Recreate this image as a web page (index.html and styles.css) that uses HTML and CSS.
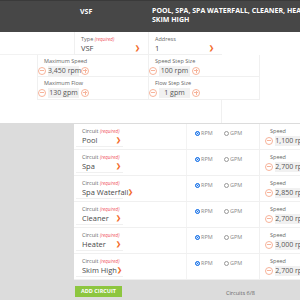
FILE: index.html
```html
<!DOCTYPE html>
<html lang="en">

<head>
    <meta charset="UTF-8">
    <meta name="viewport" content="width=device-width, initial-scale=1.0">
    <title>Pump VSF</title>
    <link rel="stylesheet" href="styles.css">
</head>

<body>
    <div id="pagina">
        <div id="cabecalho">
            <div class="cab-vazio"></div>
            <div class="cab-tipo">VSF</div>
            <div class="cab-circuitos">POOL, SPA, SPA WATERFALL, CLEANER, HEATER, SKIM HIGH</div>
        </div>

        <div id="config">
            <div class="linha linha-a">
                <div class="vazio-74"></div>
                <div class="campo-select">
                    <div class="rotulo">Type <span class="req">(required)</span></div>
                    <div class="valor">VSF <span class="seta">&#10095;</span></div>
                </div>
                <div class="campo-select">
                    <div class="rotulo">Address</div>
                    <div class="valor">1 <span class="seta">&#10095;</span></div>
                </div>
            </div>
            <div class="linha linha-b">
                <div class="vazio-37"></div>
                <div class="campo-passo esq">
                    <div class="rotulo">Maximum Speed</div>
                    <div class="passo">
                        <span class="btn-menos"></span>
                        <span class="caixa">3,450 rpm</span>
                        <span class="btn-mais"></span>
                    </div>
                </div>
                <div class="campo-passo dir">
                    <div class="rotulo">Speed Step Size</div>
                    <div class="passo">
                        <span class="btn-menos"></span>
                        <span class="caixa">100 rpm</span>
                        <span class="btn-mais"></span>
                    </div>
                </div>
            </div>
            <div class="linha linha-c">
                <div class="vazio-37"></div>
                <div class="campo-passo esq">
                    <div class="rotulo">Maximum Flow</div>
                    <div class="passo">
                        <span class="btn-menos"></span>
                        <span class="caixa">130 gpm</span>
                        <span class="btn-mais"></span>
                    </div>
                </div>
                <div class="campo-passo dir">
                    <div class="rotulo">Flow Step Size</div>
                    <div class="passo">
                        <span class="btn-menos"></span>
                        <span class="caixa">1 gpm</span>
                        <span class="btn-mais"></span>
                    </div>
                </div>
            </div>
            <div class="linha linha-d">
                <div class="vazio-148"></div>
                <div class="bloco-vazio"></div>
            </div>
        </div>

        <div id="area-circuitos">
            <div id="lista-circuitos"></div>
            <div id="rodape">
                <button id="btn-add">ADD CIRCUIT</button>
                <span id="contador">Circuits 6/8</span>
            </div>
        </div>
    </div>

    <script>
        const lista = document.querySelector("#lista-circuitos")

        const circuitos = [
            { nome: "Pool", velocidade: "1,100 rpm" },
            { nome: "Spa", velocidade: "2,700 rpm" },
            { nome: "Spa Waterfall", velocidade: "2,850 rpm" },
            { nome: "Cleaner", velocidade: "2,700 rpm" },
            { nome: "Heater", velocidade: "3,000 rpm" },
            { nome: "Skim High", velocidade: "2,700 rpm" }
        ]

        circuitos.forEach(function (c) {
            const linha = document.createElement("div")
            linha.className = "circuito"
            linha.innerHTML = `
                <div class="c-nome">
                    <div class="rotulo">Circuit <span class="req">(required)</span></div>
                    <div class="valor">${c.nome} <span class="seta">&#10095;</span></div>
                </div>
                <div class="c-radio">
                    <span class="radio marcado"></span><span class="r-txt">RPM</span>
                    <span class="radio"></span><span class="r-txt">GPM</span>
                </div>
                <div class="c-vel">
                    <div class="rotulo">Speed</div>
                    <div class="passo">
                        <span class="btn-menos"></span>
                        <span class="caixa">${c.velocidade}</span>
                    </div>
                </div>`
            lista.appendChild(linha)
        })
    </script>
</body>

</html>
```

FILE: styles.css
```css
* {
    margin: 0px;
    padding: 0px;
    box-sizing: border-box;
}

body {
    width: 300px;
    height: 300px;
    overflow: hidden;
    font-family: "Open Sans", "Liberation Sans", sans-serif;
    color: #444;
}

div#pagina {
    width: 420px;
}

/* cabecalho */
div#cabecalho {
    height: 32px;
    background-color: #474747;
    border-top: 1px solid #3a3a3a;
    display: flex;
    color: #ffffff;
    font-weight: 700;
    font-size: 7px;
    line-height: 9px;
}

div.cab-vazio {
    width: 74px;
}

div.cab-tipo {
    width: 74px;
    padding: 6px 0 0 6px;
}

div.cab-circuitos {
    width: 180px;
    padding: 5px 0 0 4px;
}

/* configuracao */
div#config {
    background-color: #ffffff;
}

div.linha {
    display: flex;
}

div.linha-a {
    height: 23px;
}

div.linha-b {
    height: 22px;
}

div.linha-c {
    height: 23px;
}

div.linha-d {
    height: 23px;
}

div.vazio-74 {
    width: 74px;
    border-bottom: 1px solid #f2f2f2;
}

div.vazio-37 {
    width: 37px;
}

div.vazio-148 {
    width: 148px;
}

div.bloco-vazio {
    width: 74px;
    border-right: 1px solid #f0f0f0;
}

div.campo-select {
    width: 74px;
    border-left: 1px solid #f0f0f0;
    border-bottom: 1px solid #f0f0f0;
    padding: 3px 8px 0 6px;
}

div.campo-select .valor {
    display: flex;
    justify-content: space-between;
}

div.rotulo {
    font-size: 5.5px;
    line-height: 8px;
    color: #666;
}

span.req {
    color: #f0505a;
    font-style: italic;
    font-size: 4.5px;
}

div.valor {
    font-size: 7.5px;
    line-height: 10px;
    color: #4a4a4a;
}

span.seta {
    color: #f36c2b;
    font-weight: 700;
    font-size: 6px;
}

div.campo-passo {
    border-left: 1px solid #f0f0f0;
    border-bottom: 1px solid #f0f0f0;
    padding-top: 2px;
}

div.campo-passo.esq {
    width: 111px;
}

div.campo-passo.dir {
    width: 112px;
    border-right: 1px solid #f0f0f0;
}

div.campo-passo .rotulo {
    padding-left: 6px;
}

div.passo {
    display: flex;
    align-items: center;
    height: 11px;
}

span.btn-menos,
span.btn-mais {
    position: relative;
    width: 8px;
    height: 8px;
    border: 1px solid #f7b39a;
    border-radius: 50%;
    flex-shrink: 0;
}

span.btn-menos::after,
span.btn-mais::after {
    content: "";
    position: absolute;
    left: 1px;
    top: 2.5px;
    width: 4px;
    height: 1px;
    background-color: #f7b39a;
}

span.btn-mais::before {
    content: "";
    position: absolute;
    left: 2.5px;
    top: 1px;
    width: 1px;
    height: 4px;
    background-color: #f7b39a;
}

span.caixa {
    width: 31px;
    height: 10px;
    margin: 0 2px;
    background-color: #f1f1f1;
    color: #555;
    font-size: 7px;
    line-height: 10px;
    text-align: center;
    white-space: nowrap;
}

/* circuitos */
div#area-circuitos {
    background-color: #dcdcdc;
    padding-top: 1px;
}

div#lista-circuitos {
    margin-left: 74px;
    background-color: #ffffff;
}

div.circuito {
    height: 26px;
    display: flex;
    border-bottom: 1px solid #f0f0f0;
}

div.c-nome {
    width: 112px;
    padding: 3px 0 0 2px;
}

div.c-nome .rotulo,
div.c-nome .valor {
    padding-left: 6px;
}

div.c-nome .valor {
    width: 47px;
    display: flex;
    justify-content: space-between;
    white-space: nowrap;
    border-bottom: 1px solid #f0f0f0;
    padding-right: 2px;
    height: 12px;
    line-height: 11px;
}

div.c-radio {
    width: 74px;
    display: flex;
    align-items: flex-start;
    padding: 6px 0 0 8px;
    border-left: 1px solid #f3f3f3;
    border-right: 1px solid #f0f0f0;
}

span.radio {
    width: 5px;
    height: 5px;
    margin-top: 1px;
    border: 0.8px solid #999;
    border-radius: 50%;
}

span.radio.marcado {
    background-color: #1a73e8;
    border-color: #1a73e8;
    box-shadow: inset 0 0 0 0.8px #ffffff;
}

span.r-txt {
    font-size: 5.5px;
    line-height: 7px;
    color: #888;
    margin-left: 1px;
    width: 23px;
}

div.c-vel {
    width: 80px;
    padding: 3px 0 0 10px;
}

div.c-vel .passo {
    margin-left: -5px;
}

div.c-vel .caixa {
    width: 34px;
}

div#rodape {
    height: 20px;
    display: flex;
    align-items: center;
}

button#btn-add {
    margin-left: 75px;
    width: 47px;
    height: 11px;
    border: none;
    background-color: #8dc63f;
    color: #ffffff;
    font-family: "Open Sans", "Liberation Sans", sans-serif;
    font-weight: 700;
    font-size: 5.5px;
    margin-top: 2px;
}

span#contador {
    margin-left: 104px;
    font-size: 5.5px;
    color: #666;
    margin-top: 6px;
}
```
